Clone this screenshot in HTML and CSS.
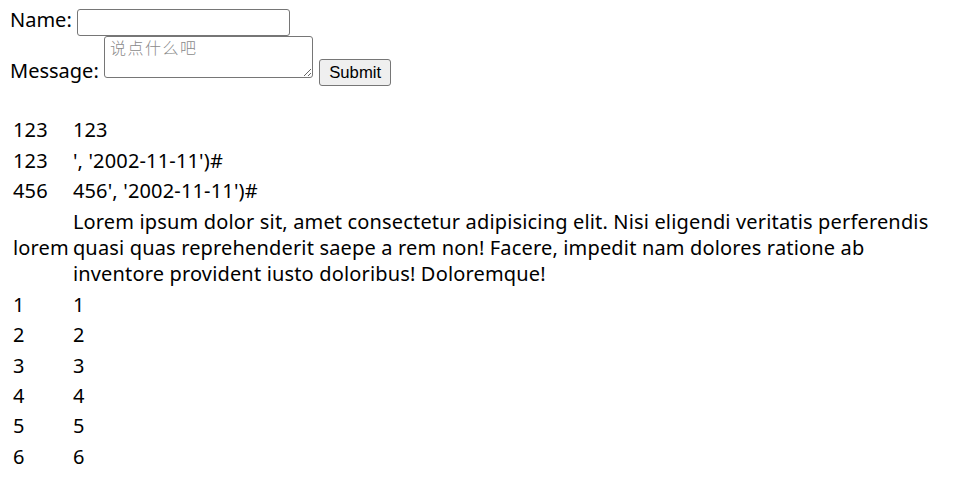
FILE: index.html
```html
<!DOCTYPE html>
<html>
<head>
<meta charset="utf-8">
<link rel="stylesheet" href="styles.css">
</head>
<body>
<form class="form">
Name: <input class="name" type="text"><br>
Message: <textarea class="msg" placeholder="说点什么吧"></textarea> <input class="submit" type="submit" value="Submit">
</form>
<br>
<table class="data">
<tr><td>123</td><td>123</td></tr>
<tr><td>123</td><td>', '2002-11-11')#</td></tr>
<tr><td>456</td><td>456', '2002-11-11')#</td></tr>
<tr><td>lorem</td><td>Lorem ipsum dolor sit, amet consectetur adipisicing elit. Nisi eligendi veritatis perferendis quasi quas reprehenderit saepe a rem non! Facere, impedit nam dolores ratione ab inventore provident iusto doloribus! Doloremque!</td></tr>
<tr><td>1</td><td>1</td></tr>
<tr><td>2</td><td>2</td></tr>
<tr><td>3</td><td>3</td></tr>
<tr><td>4</td><td>4</td></tr>
<tr><td>5</td><td>5</td></tr>
<tr><td>6</td><td>6</td></tr>
</table>
</body>
</html>
```
FILE: styles.css
```css
html, body {
  background: #fff;
}
body {
  margin: 7px 10px 10px 10px;
  font-family: "Noto Sans", "Noto Sans CJK SC", sans-serif;
  font-size: 20px;
  line-height: 26.4px;
  color: #000;
}
.form {
  margin: 0;
  line-height: 26px;
}
.name {
  width: 213px;
  height: 27px;
  box-sizing: border-box;
  border: 1px solid #767676;
  border-radius: 3px;
  padding: 1px 3px;
  margin: 0;
  font-size: 16px;
  vertical-align: baseline;
}
.msg {
  width: 209px;
  height: 42px;
  box-sizing: border-box;
  border: 1px solid #767676;
  border-radius: 3px;
  padding: 0 3px 0 5px;
  margin: 0;
  font-family: "Noto Sans CJK SC", monospace;
  font-size: 16px;
  letter-spacing: 1.5px;
  line-height: 20px;
  vertical-align: baseline;
}
.msg::placeholder {
  color: #8a8a8a;
  font-weight: 300;
}
.submit {
  width: 72px;
  height: 27px;
  box-sizing: border-box;
  border: 1px solid #767676;
  border-radius: 3px;
  background: #efefef;
  font-family: "Liberation Sans", Arial, sans-serif;
  font-size: 16.7px;
  line-height: 20px;
  color: #000;
  padding: 0 8px;
  margin: 0 0 0 1px;
}
.data {
  border-spacing: 2px;
  margin-top: 2px;
}
.data td {
  padding: 1px;
  vertical-align: middle;
  letter-spacing: 0.16px;
}
```
